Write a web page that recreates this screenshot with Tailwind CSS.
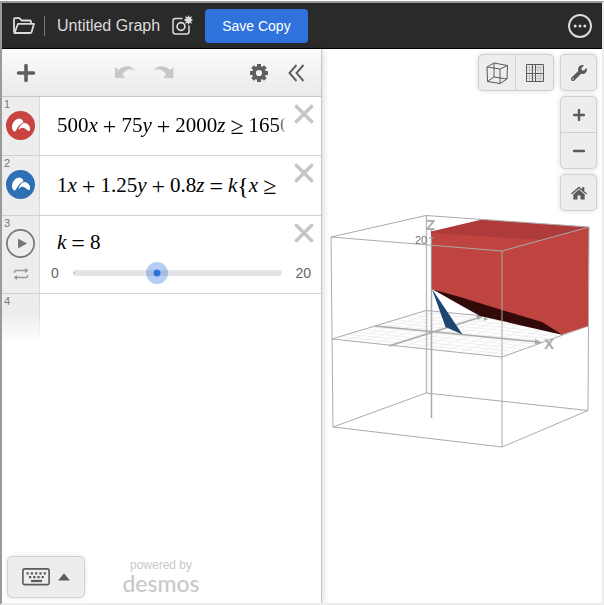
<!DOCTYPE html>
<html lang="en">
<head>
<meta charset="utf-8">
<meta name="viewport" content="width=device-width, initial-scale=1">
<title>Untitled Graph</title>
<script src="https://cdn.jsdelivr.net/npm/@tailwindcss/browser@4"></script>
</head>
<body class="bg-white pt-px h-screen font-['Liberation_Sans',Arial,sans-serif]">
<div class="h-full flex flex-col border-2 border-t-[#9a9a9a] border-l-[#9a9a9a] border-r-[#ededed] border-b-[#ededed] overflow-hidden">
  <header class="h-[46px] shrink-0 bg-[#2a2a2a] border-b border-black flex items-center pl-[11px] pr-[10px] text-[#dcdcdc]">
    <button aria-label="Open graph" class="shrink-0">
      <svg class="w-[22px] h-[18px]" viewBox="0 0 22 18" fill="none" stroke="currentColor" stroke-width="1.8" stroke-linejoin="round"><path d="M1 15.500V2.200Q1 1.200 2 1.200H6.500L8.500 3.500H17Q18 3.500 18 4.500V6.500"/><path d="M1.500 16L5 6.800H21L18.500 15.200Q18.200 16 17.300 16Z"/></svg>
    </button>
    <span class="w-px h-5 bg-[#777] ml-[9px] mr-3"></span>
    <h1 class="text-base whitespace-nowrap">Untitled Graph</h1>
    <button aria-label="Take a snapshot" class="shrink-0 ml-[11px]">
      <svg class="w-[22px] h-6" viewBox="0 0 22 24" fill="none" stroke="currentColor" stroke-width="1.500"><path d="M11.500 4.500H4.500Q2 4.500 2 7V17.500Q2 20 4.500 20H15.500Q18 20 18 17.500V11.500"/><circle cx="10" cy="12.500" r="3.900" stroke-width="1.700"/><path fill="currentColor" stroke="none" d="M17.500 1L18.500 3.200L21 2.300L20 4.800L22 6L20 7.200L21 9.700L18.500 8.800L17.500 11L16.500 8.800L14 9.700L15 7.200L12.500 6L15 4.800L14 2.300L16.500 3.200Z"/></svg>
    </button>
    <button class="shrink-0 ml-3 h-[34px] px-[17px] rounded bg-[#2f72dc] text-white text-sm whitespace-nowrap">Save Copy</button>
    <button aria-label="More options" class="ml-auto shrink-0">
      <svg class="w-6 h-6" viewBox="0 0 24 24"><circle cx="12" cy="12" r="11" fill="none" stroke="currentColor" stroke-width="1.900"/><g fill="currentColor"><circle cx="7.200" cy="12" r="1.500"/><circle cx="12" cy="12" r="1.500"/><circle cx="16.800" cy="12" r="1.500"/></g></svg>
    </button>
  </header>

  <div class="flex flex-1 min-h-0">
    <section aria-label="Expressions" class="relative z-10 w-[320px] shrink-0 flex flex-col border-r border-[#c4c4c4] shadow-[0_0_8px_rgba(0,0,0,0.2)] bg-white">
      <div class="h-12 shrink-0 flex items-center border-b border-[#c8c8c8] bg-linear-to-b from-[#fcfcfc] to-[#eaeaea] pl-[14px] pr-4 text-[#5f5f5f]">
        <button aria-label="Add item"><svg class="w-5 h-5" viewBox="0 0 20 20"><path d="M10 2.500V17.500M2.500 10H17.500" stroke="currentColor" stroke-width="3.600" stroke-linecap="round"/></svg></button>
        <div class="flex gap-4 ml-[78px] text-[#c8c8c8]">
          <button aria-label="Undo" disabled><svg class="w-[22px] h-4" viewBox="0 0 22 16"><path fill="currentColor" d="M1 2L4.500 5C9 0 17 -.5 21.500 5.500C16.500 3 12 4.300 8.500 9L11 13H1Z"/></svg></button>
          <button aria-label="Redo" disabled><svg class="w-[22px] h-4" viewBox="0 0 22 16"><path fill="currentColor" d="M21.500 2L18 5C13.500 0 5.500 -.5 1 5.500C6 3 10.500 4.300 14 9L11.500 13H21.500Z"/></svg></button>
        </div>
        <button aria-label="Edit list" class="ml-auto"><svg class="w-5 h-5" viewBox="0 0 20 20" fill="none" stroke="currentColor"><circle cx="10" cy="10" r="5" stroke-width="3.800"/><path d="M10 1V4M10 16V19M1 10H4M16 10H19M3.600 3.600L5.700 5.700M14.300 14.300L16.400 16.400M16.400 3.600L14.300 5.700M5.700 14.300L3.600 16.400" stroke-width="4"/></svg></button>
        <button aria-label="Hide list" class="ml-[18px]"><svg class="w-[18px] h-[18px]" viewBox="0 0 18 18" fill="none" stroke="currentColor" stroke-width="1.900"><path d="M9.500 1L2.500 9L9.500 17M16.500 1L9.500 9L16.500 17"/></svg></button>
      </div>

      <ol class="text-black">
        <li class="h-[59px] flex border-b border-[#d0d0d0]">
          <div class="w-[38px] shrink-0 bg-[#ededed] border-r border-[#d8d8d8] pl-[2px] text-[11px] leading-[14px] text-[#777]">1
            <button aria-label="Hide expression 1" class="block ml-[2px] text-[#c74440]"><svg class="w-[29px] h-[29px]" viewBox="0 0 29 29"><circle cx="14.500" cy="14.500" r="14.500" fill="currentColor"/><path fill="#fff" d="M6 15.500C6.500 11.500 9.500 7.500 13.500 7.500C15.500 7.600 17.200 9.500 17.500 11.200C14.500 12.500 12.500 15 11 17.500C10 19.500 9.500 20.800 8.500 20.500C6.500 20 6 18 6 15.500Z"/><path fill="#fff" d="M12.500 18.500C13.500 15.500 15.500 12 19 12C22.500 12.500 24.500 16 24 19C23.800 20.200 23 20.500 22 19.800C20 18.200 18 16.500 16 16.800C14 17.200 12.500 19.500 12.500 18.500Z"/></svg></button>
          </div>
          <div class="flex-1 min-w-0 ml-[17px] overflow-hidden whitespace-nowrap flex items-center gap-[5px] font-['Liberation_Serif',serif] text-[21px] mask-r-from-[220px] mask-r-to-[230px]"><span>500<i>x</i></span><span class="text-2xl">+</span><span>75<i>y</i></span><span class="text-2xl">+</span><span>2000<i>z</i></span><span class="text-2xl">≥</span><span>1650</span></div>
          <button aria-label="Delete expression 1" class="self-start ml-[8px] mr-[7px] mt-[7px] text-[#c6c6c6]"><svg class="w-5 h-5" viewBox="0 0 20 20"><path d="M2.500 2.500L17.500 17.500M17.500 2.500L2.500 17.500" stroke="currentColor" stroke-width="3.600" stroke-linecap="round"/></svg></button>
        </li>
        <li class="h-[60px] flex border-b border-[#d0d0d0]">
          <div class="w-[38px] shrink-0 bg-[#ededed] border-r border-[#d8d8d8] pl-[2px] text-[11px] leading-[14px] text-[#777]">2
            <button aria-label="Hide expression 2" class="block ml-[2px] text-[#2d70b3]"><svg class="w-[29px] h-[29px]" viewBox="0 0 29 29"><circle cx="14.500" cy="14.500" r="14.500" fill="currentColor"/><path fill="#fff" d="M6 15.500C6.500 11.500 9.500 7.500 13.500 7.500C15.500 7.600 17.200 9.500 17.500 11.200C14.500 12.500 12.500 15 11 17.500C10 19.500 9.500 20.800 8.500 20.500C6.500 20 6 18 6 15.500Z"/><path fill="#fff" d="M12.500 18.500C13.500 15.500 15.500 12 19 12C22.500 12.500 24.500 16 24 19C23.800 20.200 23 20.500 22 19.800C20 18.200 18 16.500 16 16.800C14 17.200 12.500 19.500 12.500 18.500Z"/></svg></button>
          </div>
          <div class="flex-1 min-w-0 ml-[17px] overflow-hidden whitespace-nowrap flex items-center gap-[5px] font-['Liberation_Serif',serif] text-[21px]"><span>1<i>x</i></span><span class="text-2xl">+</span><span>1.25<i>y</i></span><span class="text-2xl">+</span><span>0.8<i>z</i></span><span class="text-2xl">=</span><span class="flex items-center"><i>k</i><span class="text-2xl">{</span><i>x</i></span><span class="text-2xl">≥</span></div>
          <button aria-label="Delete expression 2" class="self-start ml-[8px] mr-[7px] mt-[7px] text-[#c6c6c6]"><svg class="w-5 h-5" viewBox="0 0 20 20"><path d="M2.500 2.500L17.500 17.500M17.500 2.500L2.500 17.500" stroke="currentColor" stroke-width="3.600" stroke-linecap="round"/></svg></button>
        </li>
        <li class="h-[78px] flex border-b border-[#d0d0d0]">
          <div class="w-[38px] shrink-0 bg-[#ededed] border-r border-[#d8d8d8] pl-[2px] text-[11px] leading-[14px] text-[#777]">3
            <button aria-label="Play slider" class="block ml-[2px] -mt-px"><svg class="w-[29px] h-[29px]" viewBox="0 0 29 29"><circle cx="14.500" cy="14.500" r="13.600" fill="none" stroke="currentColor" stroke-width="1.700"/><path d="M12 9.500L21 14.500L12 19.500Z" fill="currentColor"/></svg></button>
            <button aria-label="Loop mode" class="block ml-[9px] mt-2 text-[#999]"><svg class="w-4 h-4" viewBox="0 0 16 16" fill="none" stroke="currentColor" stroke-width="1.300"><path d="M1.500 7V5.500Q1.500 4.500 2.500 4.500H14M14.500 9V10.500Q14.500 11.500 13.500 11.500H2"/><path d="M12 2V7L15.500 4.500ZM4 9V14L.5 11.500Z" fill="currentColor" stroke="none"/></svg></button>
          </div>
          <div class="flex-1 min-w-0">
            <div class="flex h-[46px]">
              <div class="flex-1 ml-[17px] mt-[9px] h-9 flex items-center gap-[5px] font-['Liberation_Serif',serif] text-[21px]"><i>k</i><span class="text-2xl">=</span><span>8</span></div>
              <button aria-label="Delete expression 3" class="self-start mr-[7px] mt-[7px] text-[#c6c6c6]"><svg class="w-5 h-5" viewBox="0 0 20 20"><path d="M2.500 2.500L17.500 17.500M17.500 2.500L2.500 17.500" stroke="currentColor" stroke-width="3.600" stroke-linecap="round"/></svg></button>
            </div>
            <div class="flex items-center h-[22px] pl-[11px] pr-[10px] text-sm text-[#666]">
              <label for="k">0</label>
              <div class="relative flex-1 ml-[3px] mr-[2px] h-[22px]">
                <span class="absolute inset-x-[11px] top-2 h-[6px] rounded-full bg-[#e4e4e4]"></span>
                <span class="absolute left-[11px] top-[10px] size-[2px] rounded-full bg-[#bbb]"></span>
                <input id="k" type="range" min="0" max="20" value="8" aria-label="k" class="absolute inset-0 w-full h-[22px] appearance-none bg-transparent [&::-webkit-slider-thumb]:appearance-none [&::-webkit-slider-thumb]:w-[22px] [&::-webkit-slider-thumb]:h-[22px] [&::-webkit-slider-thumb]:rounded-full [&::-webkit-slider-thumb]:bg-[radial-gradient(circle,#2f72dc_0_3px,rgba(47,114,220,0.35)_4px)]">
              </div>
              <span>20</span>
            </div>
          </div>
        </li>
        <li class="h-[50px] flex">
          <div class="w-[38px] bg-linear-to-b from-[#ededed] from-40% to-white pl-[2px] text-[11px] leading-[14px] text-[#777]">4</div>
          <div class="w-px -ml-px bg-linear-to-b from-[#d8d8d8] from-30% to-white"></div>
        </li>
      </ol>

      <footer class="mt-auto flex items-end pl-[5px] pb-[5px]">
        <button aria-label="Open keypad" class="w-[78px] h-[42px] rounded-[5px] border border-[#d0d0d0] bg-[#ededed] shadow-[0_0_5px_rgba(0,0,0,0.1)] flex items-center justify-center gap-2 text-[#5a5a5a]">
          <svg class="w-7 h-[18px]" viewBox="0 0 28 18" fill="none" stroke="currentColor"><rect x=".9" y=".9" width="26.200" height="15.700" rx="1.800" stroke-width="1.600"/><path d="M4.500 5.300H24" stroke-width="2.200" stroke-dasharray="2.200 2.100"/><path d="M7 9.200H22" stroke-width="2.200" stroke-dasharray="2.200 2"/><path d="M9 13H20" stroke-width="2.200"/></svg>
          <svg class="w-3 h-2" viewBox="0 0 12 8"><path d="M6 .5L12 7.500H0Z" fill="currentColor"/></svg>
        </button>
        <a href="#" class="ml-[36px] w-20 flex flex-col items-center gap-px pb-[5px] text-[#c8c8c8]">
          <span class="text-xs leading-[13px]">powered by</span>
          <span class="text-[23px] leading-5 h-5 font-medium font-[Lato,sans-serif]">desmos</span>
        </a>
      </footer>
    </section>

    <main aria-label="3D graph" class="relative flex-1 min-w-0">
      <svg class="w-full h-full" viewBox="322 49 280 554" fill="none" stroke="#aaa" stroke-width="1">
        <path id="grid" stroke="#ececec" stroke-width=".8"/>
        <path stroke="#bbb" stroke-width="1.400" d="M426.500 215V393"/>
        <path d="M332 339L426 310.500L588 326L502 357Z"/>
        <path stroke-width="1.500" d="M375 326L538 342M389 346L481 317"/>
        <path fill="#aaa" stroke="none" d="M535 339L542 342.500L535 344.500ZM476 315.500L483 316.500L478 320ZM484 317L488 319L484 321Z"/>
        <path stroke-width="1.500" d="M431.500 230V418"/>
        <path fill="#320b09" stroke="none" d="M432 289L502 306L542 320L563 335L480 316L462 306Z"/>
        <path fill="#bf4440" stroke="none" d="M431 232L589 227L588 326L562 334.500L542 322L502 310L460 297L431.500 289Z"/>
        <path fill="#ae3b39" stroke="none" d="M431 231.500L482 219.500L589 227L543 240L431 233Z"/>
        <path fill="#1c4571" stroke="none" d="M432 289L462.500 334.500L445.500 327Z"/>
        <path d="M331 237L426 215.500L589 227L502 251ZM331 237L333 427M502 251V447M589 227L588 410.500M333 427L426 393L588 410.500L502 447Z"/>
        <path stroke="#999" d="M431.500 236V290M429 238H434"/>
        <g stroke="none" font-family="Liberation Sans, Arial, sans-serif">
          <text x="415" y="244" font-size="11" fill="#777">20</text>
          <text x="426" y="230" font-size="15" font-weight="700" fill="#aaa">Z</text>
          <text x="544" y="349" font-size="15" font-weight="700" fill="#aaa">X</text>
        </g>
      </svg>
      <div class="absolute top-[5px] right-[5px] flex items-start gap-[6px] text-[#5a5a5a]">
        <div class="flex rounded-[5px] border border-[#d0d0d0] bg-[#ededed] divide-x divide-[#d0d0d0] shadow-[0_0_5px_rgba(0,0,0,0.15)]">
          <button aria-label="Perspective" class="w-[37px] h-[35px] flex items-center justify-center"><svg class="w-[22px] h-[22px]" viewBox="0 0 22 22" fill="none" stroke="currentColor" stroke-width="1"><path d="M1 5L8 1L21.500 3.500L14 7ZM1 5L1.500 19.500L14 21.500V7M14 21.500L21 17L21.500 3.500M8 1V15L1.500 19.500M8 15L21 17"/></svg></button>
          <button aria-label="Grid view" class="w-[37px] h-[35px] flex items-center justify-center"><svg class="w-5 h-5" viewBox="0 0 20 20" fill="none" stroke="currentColor"><path stroke-width=".5" d="M4.500 1V19M7 1V19M13 1V19M15.500 1V19M1 4.500H19M1 7H19M1 13H19M1 15.500H19" opacity=".5"/><path d="M1.500 1.500H18.500V18.500H1.500ZM7.500 1V19"/><path d="M10.500 1V19M1 10.500H19"/></svg></button>
        </div>
        <div class="flex flex-col gap-[5px]">
          <button aria-label="Graph settings" class="w-[37px] h-[37px] rounded-[5px] border border-[#d0d0d0] bg-[#ededed] shadow-[0_0_5px_rgba(0,0,0,0.15)] flex items-center justify-center"><svg class="w-4 h-4" viewBox="0 0 512 512" fill="currentColor"><path d="M507.700 109.100c-2.200-9-13.500-12.100-20.100-5.500l-74.400 74.400-67.900-11.300L334 98.900l74.400-74.400c6.600-6.600 3.400-17.900-5.700-20.200-47.400-11.700-99.600.9-136.600 37.900-39.600 39.600-50.500 97.100-34.100 147.200L18.700 402.800c-25 25-25 65.500 0 90.500s65.500 25 90.500 0l213.200-213.200c50.100 16.700 107.500 5.700 147.400-34.200 37.100-37.100 49.700-89.300 37.900-136.800zM64 472c-13.300 0-24-10.700-24-24s10.700-24 24-24 24 10.700 24 24-10.700 24-24 24z"/></svg></button>
          <div class="flex flex-col w-[37px] rounded-[5px] border border-[#d0d0d0] bg-[#ededed] divide-y divide-[#d0d0d0] shadow-[0_0_5px_rgba(0,0,0,0.15)]">
            <button aria-label="Zoom in" class="h-9 flex items-center justify-center"><svg class="w-3 h-3" viewBox="0 0 12 12"><path d="M6 1V11M1 6H11" stroke="currentColor" stroke-width="2.400" stroke-linecap="round"/></svg></button>
            <button aria-label="Zoom out" class="h-[35px] flex items-center justify-center"><svg class="w-3 h-3" viewBox="0 0 12 12"><path d="M1 6H11" stroke="currentColor" stroke-width="2.400" stroke-linecap="round"/></svg></button>
          </div>
          <button aria-label="Default viewport" class="w-[37px] h-[37px] rounded-[5px] border border-[#d0d0d0] bg-[#ededed] shadow-[0_0_5px_rgba(0,0,0,0.15)] flex items-center justify-center"><svg class="w-4 h-[14px]" viewBox="0 0 16 14" fill="currentColor"><path d="M8 .5L11 3.200V1.200H13.300V5.200L16 7.600L15.200 8.600L8 2.400L.8 8.600L0 7.600Z"/><path d="M8 3.600L13.700 8.500V13.500H9.500V9.500H6.500V13.500H2.300V8.500Z"/></svg></button>
        </div>
      </div>
    </main>
  </div>
</div>
<script>
  // Floor grid of the 3D box: lines joining opposite edges of the z = 0 plane.
  const corners = { a: [332, 339], b: [426, 310], c: [588, 326], d: [502, 357] };
  const mix = (p, q, t) => [p[0] + (q[0] - p[0]) * t, p[1] + (q[1] - p[1]) * t].join(' ');
  let lines = '';
  for (let i = 1; i < 12; i++) {
    const t = i / 12;
    lines += `M${mix(corners.a, corners.b, t)}L${mix(corners.d, corners.c, t)}`;
    lines += `M${mix(corners.a, corners.d, t)}L${mix(corners.b, corners.c, t)}`;
  }
  document.getElementById('grid').setAttribute('d', lines);
</script>
</body>
</html>
